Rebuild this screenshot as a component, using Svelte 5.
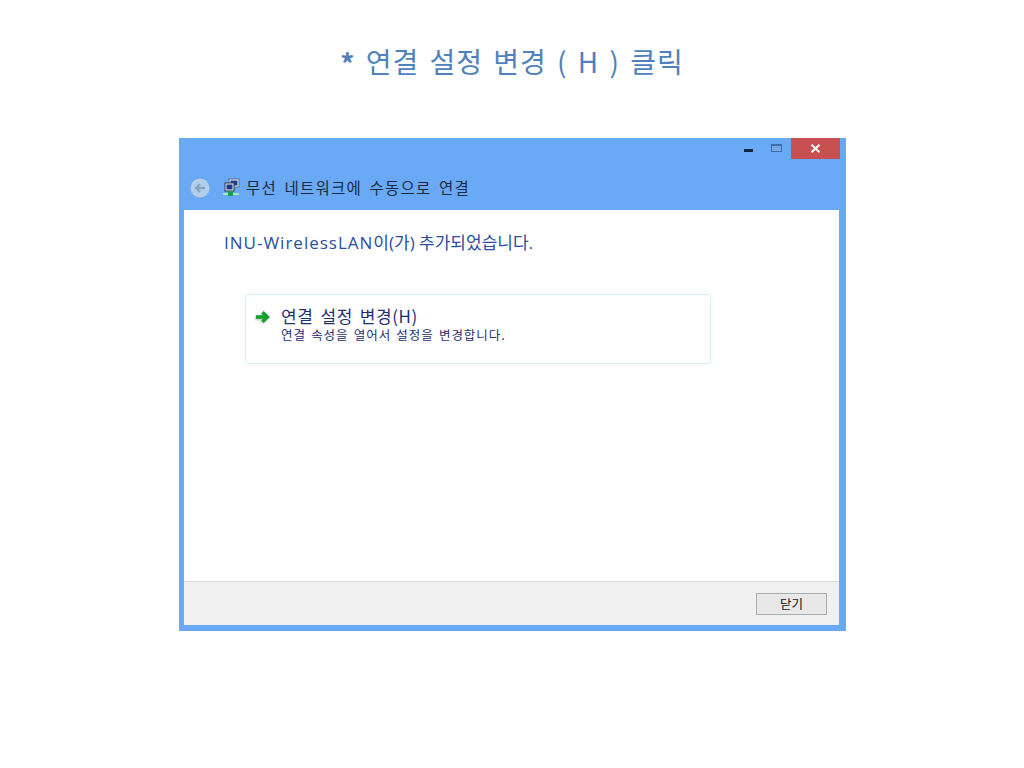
<script>
	let title = '무선 네트워크에 수동으로 연결';
</script>

<div class="page">
	<h1><span class="star">*</span> 연결 설정 변경 ( H ) 클릭</h1>

	<div class="window">
		<div class="controls">
			<span class="min"></span>
			<span class="max"></span>
			<span class="close">
				<svg width="11" height="9" viewBox="0 0 11 9"><path d="M1.5 .8L9.5 8.2M9.5 .8L1.5 8.2" stroke="#fff" stroke-width="2" fill="none"/></svg>
			</span>
		</div>

		<div class="titlebar">
			<svg class="back" width="20" height="20" viewBox="0 0 20 20">
				<circle cx="10" cy="10" r="9.5" fill="#b4cfec"/>
				<path d="M15 10H6.5M10 6.2L6 10L10 13.8" stroke="#8aa6c6" stroke-width="2.4" fill="none"/>
			</svg>
			<svg class="net" width="18" height="18" viewBox="0 0 18 18">
				<rect x="7" y="1" width="10" height="8" fill="#e8eef5" stroke="#5b6f90"/>
				<rect x="8.5" y="2.5" width="7" height="5" fill="#24408c"/>
				<rect x="3" y="5" width="9" height="8" fill="#eef2f7" stroke="#2a3550"/>
				<rect x="4.5" y="6.5" width="6" height="5" fill="#1f3a86"/>
				<rect x="1" y="15" width="16" height="2" fill="#a5e6b8"/>
				<rect x="6" y="13" width="5" height="5" fill="#12a04a"/>
			</svg>
			<span class="title">{title}</span>
		</div>

		<div class="body">
			<div class="content">
				<p class="heading"><span class="ssid">INU-WirelessLAN</span>이(가) 추가되었습니다.</p>

				<div class="link">
					<svg class="arrow" width="16" height="14" viewBox="0 0 16 14">
						<path d="M1 7H11.5M7.5 2.2L12.5 7L7.5 11.8" stroke="#12a02a" stroke-width="3.4" fill="none"/>
					</svg>
					<div>
						<div class="link-title">연결 설정 변경(H)</div>
						<div class="link-desc">연결 속성을 열어서 설정을 변경합니다.</div>
					</div>
				</div>
			</div>

			<div class="footer">
				<button>닫기</button>
			</div>
		</div>
	</div>
</div>

<style>
	:global(body) {
		background: #fff;
	}

	.page {
		height: 768px;
		padding-top: 41px;
		box-sizing: border-box;
		font-family: "Noto Sans CJK KR", "Noto Sans", sans-serif;
	}

	h1 {
		margin: 0 0 57px 0;
		height: 40px;
		line-height: 40px;
		font-size: 28px;
		font-weight: 400;
		text-align: center;
		color: #4f81bd;
		letter-spacing: 1px;
		word-spacing: 3px;
	}

	.star {
		font-weight: 700;
		vertical-align: -2px;
	}

	.window {
		width: 667px;
		height: 493px;
		margin-left: 179px;
		background: #6aa9f5;
		display: flex;
		flex-direction: column;
	}

	.controls {
		height: 21px;
		display: flex;
		justify-content: flex-end;
		padding-right: 6px;
	}

	.min {
		width: 9px;
		height: 3px;
		margin-top: 11px;
		margin-right: 18px;
		background: #10263f;
	}

	.max {
		width: 9px;
		height: 5px;
		margin-top: 6px;
		margin-right: 9px;
		background: #76a8e4;
		border: 1px solid #3a6ea8;
		border-top-width: 2px;
	}

	.close {
		width: 49px;
		height: 21px;
		background: #c75050;
		display: flex;
		align-items: center;
		justify-content: center;
	}

	.titlebar {
		height: 51px;
		display: flex;
		align-items: center;
		padding-left: 11px;
		padding-top: 4px;
		box-sizing: border-box;
	}

	.back {
		margin-right: 12px;
		margin-top: 2px;
	}

	.net {
		margin-right: 6px;
	}

	.title {
		font-size: 15.5px;
		letter-spacing: 1.2px;
		word-spacing: 3px;
		color: #1a2c44;
	}

	.body {
		flex: 1;
		margin: 0 7px 6px 5px;
		background: #fff;
		display: flex;
		flex-direction: column;
	}

	.content {
		flex: 1;
		padding: 20px 0 0 40px;
	}

	.heading {
		margin: 0 0 39px 0;
		height: 25px;
		line-height: 25px;
		font-family: "Open Sans", "Noto Sans CJK KR", sans-serif;
		font-size: 17px;
		color: #2a4ea0;
	}

	.ssid {
		letter-spacing: 1px;
	}

	.link {
		width: 466px;
		height: 70px;
		margin-left: 21px;
		box-sizing: border-box;
		border: 1px solid #d3f0f8;
		border-radius: 3px;
		padding: 10px 0 0 9px;
		display: flex;
	}

	.arrow {
		margin-right: 10px;
		margin-top: 5px;
		filter: drop-shadow(-1px 1px 1px rgba(0, 60, 0, 0.3));
	}

	.link-title {
		font-size: 17px;
		line-height: 21px;
		letter-spacing: 0.6px;
		word-spacing: 2.5px;
		color: #1e3070;
	}

	.link-desc {
		font-size: 12.5px;
		line-height: 17px;
		letter-spacing: 0.95px;
		word-spacing: 1.5px;
		color: #1e3070;
	}

	.footer {
		height: 44px;
		box-sizing: border-box;
		background: #f0f0f0;
		border-top: 1px solid #dcdcdc;
		display: flex;
		justify-content: flex-end;
		align-items: center;
		padding-right: 12px;
		padding-top: 1px;
	}

	button {
		width: 71px;
		height: 22px;
		padding: 0;
		background: #e8e8e8;
		border: 1px solid #acacac;
		font-family: inherit;
		font-size: 12.5px;
		line-height: 18px;
		color: #111;
	}
</style>
